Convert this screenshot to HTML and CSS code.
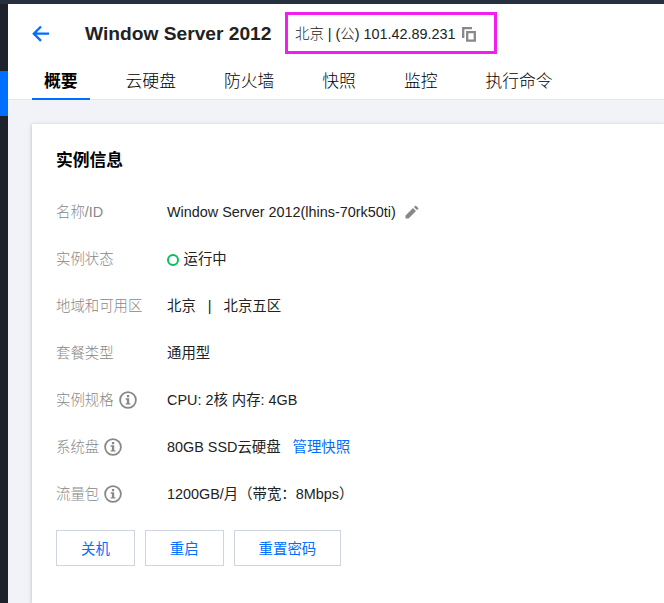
FILE: index.html
```html
<!DOCTYPE html>
<html lang="zh-CN">
<head>
<meta charset="utf-8">
<title>Window Server 2012</title>
<link rel="stylesheet" href="styles.css">
</head>
<body>
<svg class="defs" width="0" height="0">
  <symbol id="info" viewBox="0 0 18 18">
    <circle cx="9" cy="9" r="7.9" fill="none" stroke="#888" stroke-width="1.8"/>
    <path d="M7.900 4h2.300v2.200H7.900zM6.700 7.300h3.500v4.900h1.200v1.400H6.700v-1.400h1.200V8.700H6.700z" fill="#888"/>
  </symbol>
</svg>
<div class="topbar"></div>
<div class="layout">
  <aside class="sidebar"><div class="sidebar-active"></div></aside>
  <main class="main">
    <header class="header">
      <div class="title-row">
        <svg class="back" width="18" height="18" viewBox="0 0 18 18"><path d="M9 1.500L1.800 8.700l7.200 7.200M2 8.700h15" fill="none" stroke="#006eff" stroke-width="2.3"/></svg>
        <h1 class="title">Window Server 2012</h1>
        <div class="address">
          <span>北京 | (公) 101.42.89.231</span>
          <svg class="copy" width="14" height="15" viewBox="0 0 14 15"><path d="M1.200 11V1.200H10M5.200 5.200h7.600v8.400H5.200z" fill="none" stroke="#888" stroke-width="2.300"/></svg>
        </div>
      </div>
      <nav class="tabs">
        <a class="tab active">概要</a><a class="tab">云硬盘</a><a class="tab">防火墙</a><a class="tab">快照</a><a class="tab">监控</a><a class="tab">执行命令</a>
      </nav>
    </header>
    <section class="card">
      <h2 class="card-title">实例信息</h2>
      <dl class="info">
        <dt>名称/ID</dt>
        <dd>Window Server 2012(lhins-70rk50ti)<svg class="edit" width="14" height="14" viewBox="0 0 14 14"><path d="M0.500 13.500v-3L8 3l3 3-7.500 7.500zM8.900 2.100L10.700.4l3 3-1.800 1.700z" fill="#888"/></svg></dd>
        <dt>实例状态</dt>
        <dd><span class="status"></span>运行中</dd>
        <dt>地域和可用区</dt>
        <dd>北京<span class="divider">|</span>北京五区</dd>
        <dt>套餐类型</dt>
        <dd>通用型</dd>
        <dt>实例规格<svg class="help"><use href="#info"/></svg></dt>
        <dd>CPU: 2核 内存: 4GB</dd>
        <dt>系统盘<svg class="help"><use href="#info"/></svg></dt>
        <dd>80GB SSD云硬盘<a class="link">管理快照</a></dd>
        <dt>流量包<svg class="help"><use href="#info"/></svg></dt>
        <dd>1200GB/月（带宽：8Mbps）</dd>
      </dl>
      <div class="actions">
        <button class="btn">关机</button>
        <button class="btn">重启</button>
        <button class="btn">重置密码</button>
      </div>
    </section>
  </main>
</div>
</body>
</html>
```
FILE: styles.css
```css
* { box-sizing: border-box; }
body {
  margin: 0;
  height: 603px;
  overflow: hidden;
  display: flex;
  flex-direction: column;
  background: #f2f3f8;
  color: #111;
  font: 300 14.4px/20px "Liberation Sans", "Noto Sans CJK SC", sans-serif;
}
.defs { display: none; }
.topbar { height: 4px; flex: none; background: #262f3e; }
.layout { display: flex; flex: 1; min-height: 0; }
.sidebar { width: 8px; flex: none; padding-top: 67px; background: #1e222d; }
.sidebar-active { height: 45px; background: #006eff; }
.main { flex: 1; min-width: 0; display: flex; flex-direction: column; }
.header {
  height: 96px;
  flex: none;
  padding-left: 24px;
  background: #fff;
  border-bottom: 1px solid #e5e7ed;
}
.title-row { display: flex; align-items: center; height: 59px; }
.back { flex: none; }
.title { margin: 0 0 0 35px; width: 200px; font-size: 19.2px; line-height: 28px; font-weight: 700; color: #222; white-space: nowrap; }
.address {
  width: 212px;
  height: 42px;
  margin-top: -1px;
  padding: 2px 0 0 7px;
  display: flex;
  align-items: center;
  gap: 6px;
  border: 3px solid #f41cf0;
  color: #222;
  white-space: nowrap;
}
.tabs { display: flex; gap: 24px; height: 37px; }
.tab { height: 37px; padding: 0 12px; font-size: 16.8px; line-height: 38px; color: #000; }
.tab.active { font-weight: 700; border-bottom: 2px solid #006eff; }
.card {
  flex: 1;
  margin: 24px 0 0 24px;
  padding: 25px 24px 24px;
  background: #fff;
  box-shadow: 0 1px 4px rgba(54, 58, 80, .32);
}
.card-title { margin: 0; font-size: 16.8px; line-height: 24px; font-weight: 700; color: #000; }
.info {
  display: grid;
  grid-template-columns: 111px 1fr;
  grid-auto-rows: 47.15px;
  margin: 15px 0 0;
  align-items: center;
}
.info dt, .info dd { margin: 0; display: flex; align-items: center; white-space: nowrap; }
.info dt { color: #888; }
.info dd { color: #222; font-weight: 400; }
.help { width: 18px; height: 18px; margin-left: 5px; }
.edit { margin-left: 9px; }
.status { width: 12px; height: 12px; margin: 2px 4.5px 0 0; border: 2px solid #0abf5b; border-radius: 50%; }
.divider { margin: 0 12px; }
.link { margin-left: 12px; color: #006eff; }
.actions { display: flex; gap: 10px; margin-top: 12px; }
.btn {
  height: 36px;
  padding: 2px 24px 0;
  border: 1px solid #cfd5de;
  background: #fff;
  color: #006eff;
  font: inherit;
  font-weight: 400;
}
```
